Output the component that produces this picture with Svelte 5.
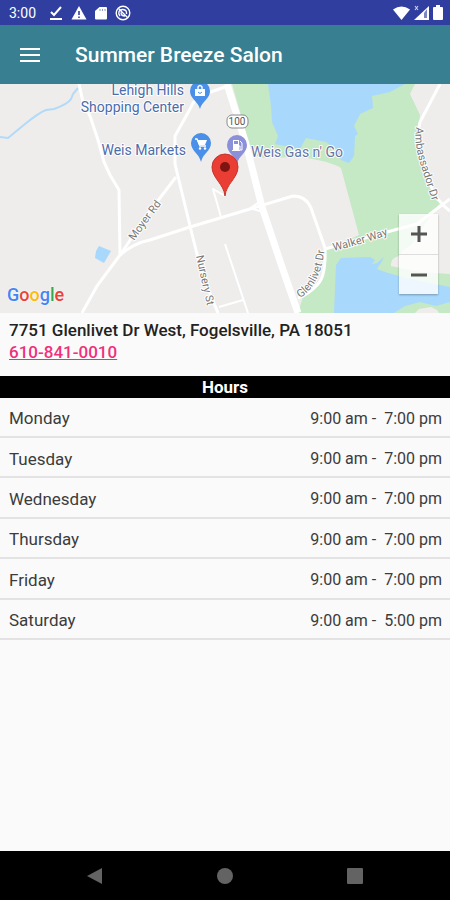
<script>
  const salon = {
    name: 'Summer Breeze Salon',
    address: '7751 Glenlivet Dr West, Fogelsville, PA 18051',
    phone: '610-841-0010',
  };

  const hours = [
    { day: 'Monday', open: '9:00 am', close: '7:00 pm' },
    { day: 'Tuesday', open: '9:00 am', close: '7:00 pm' },
    { day: 'Wednesday', open: '9:00 am', close: '7:00 pm' },
    { day: 'Thursday', open: '9:00 am', close: '7:00 pm' },
    { day: 'Friday', open: '9:00 am', close: '7:00 pm' },
    { day: 'Saturday', open: '9:00 am', close: '5:00 pm' },
  ];
</script>

<div class="screen">
  <div class="status">
    <span class="clock">3:00</span>
    <div class="notices">
      <svg width="14" height="16" viewBox="0 0 14 16" fill="none" stroke="#fff" stroke-width="2">
        <path d="M2 7l3 3 7-8M1 14h12" />
      </svg>
      <svg width="16" height="16" viewBox="0 0 16 16">
        <path d="M8 1l7.500 13.500H.5z" fill="#fff" />
        <path d="M8 6v4M8 11.500v1.500" stroke="#303f9f" stroke-width="1.600" />
      </svg>
      <svg width="12" height="16" viewBox="0 0 12 16">
        <path d="M4.500 2H11q1 0 1 1v10.500q0 1-1 1H1q-1 0-1-1V6z" fill="#fff" />
        <path d="M5 4v2M7.500 4v2M10 4v2" stroke="#8d96cc" />
      </svg>
      <svg width="16" height="16" viewBox="0 0 16 16" fill="none" stroke="#fff" stroke-width="1.400">
        <circle cx="8" cy="8" r="6.800" />
        <path d="M3.500 3.500l9 9M5 11C2.500 8 4 4 8 4.500q4 .5 3.500 4.500M6 7.500q0 3.500 4 3.500" />
      </svg>
    </div>
    <div class="system">
      <svg width="17" height="16" viewBox="0 0 17 16">
        <path d="M0 4.500Q8.500-1.500 17 4.500L8.500 15z" fill="#fff" />
      </svg>
      <svg width="15" height="16" viewBox="0 0 15 16">
        <path d="M0 15L15 1v14z" fill="#fff" />
        <path d="M10 8v5h3V4z" fill="#7c86c4" />
        <path d="M1 1l3 4M4 1L1 5" stroke="#c5cae9" stroke-width="1.200" />
      </svg>
      <svg width="10" height="16" viewBox="0 0 10 16">
        <path d="M3 0h4v2h2q1 0 1 1v11q0 1-1 1H1q-1 0-1-1V3q0-1 1-1h2z" fill="#fff" />
      </svg>
    </div>
  </div>

  <header>
    <button class="menu" aria-label="Menu">
      <svg width="20" height="14" viewBox="0 0 20 14">
        <path d="M0 1h20M0 7h20M0 13h20" stroke="#fff" stroke-width="2" />
      </svg>
    </button>
    <h1>{salon.name}</h1>
  </header>

  <section class="map" aria-label="Map">
    <svg class="tiles" viewBox="0 0 450 229" preserveAspectRatio="xMidYMid slice">
      <rect width="450" height="229" fill="#eeedec" />

      <!-- parks -->
      <path
        fill="#c5e8c5"
        d="M232 0H415L410 10 420 31 418 52 426 86 440 120 420 138 450 190V229H298L303 213Q322 203 324 183L325 166 359 151 341 84Q330 77 300 73L262 74 252 70z"
      />
      <path fill="#eeedec" d="M391 182Q390 174 399 172L420 138 440 120 450 128V190L420 188z" />
      <path fill="#c5e8c5" d="M359 151L398 144 430 131 438 120 412 160 395 172 370 165z" />

      <!-- lakes and stream -->
      <path
        fill="#a9d8fd"
        d="M268 0L271 22 272 38 278 52 275 60 300 65 306 54 326 58 336 65 341 76 349 79 354 72 355 52 358 50 354 42 360 30 373 24 372 12 390 8 405 0z"
      />
      <path
        fill="#a9d8fd"
        d="M334 229L336 181 341 174 370 173 375 176 372 180 377 179 384 173 382 177 377 185 388 189 410 195 450 203V218L436 222 420 218 405 222 394 229z"
      />
      <path fill="#eeedec" d="M415 229l4-4 12-2 6 3 2 3z" />
      <path fill="#a9d8fd" d="M99 162L111 167 104 179 95 174 96 167z" />
      <path
        fill="none"
        stroke="#b2daf9"
        stroke-width="2"
        d="M0 53L8 54 25 40Q40 28 46 26L54 25Q68 20 71 15L73 10 78 4"
      />

      <!-- roads -->
      <g fill="none" stroke="#fff" stroke-width="3" stroke-linejoin="round">
        <path d="M79 0L83 18 90 32 98 56 104 78 110 91 119 106 120 171 97 202 82 229" />
        <path d="M225 3L208 9Q195 12 190 25L175 52V80L190 142 202 190 218 229" />
        <path d="M120 171Q134 159 150 156L190 143 250 125 293 112Q306 112 311 124L325 164Q326 192 318 200 308 211 298 214" />
        <path d="M176 93L150 127 120 171" />
        <path d="M325 165L398 145 417 140 430 130 450 115" />
        <path d="M440 0L420 38Q416 52 421 70L430 100Q436 117 450 127" />
        <path stroke-width="2" d="M225 112L213 105 221 133M225 160L248 229M219 223L243 216M248 126l14-10M250 124l16 5" />
        <path stroke-width="7" d="M227 0L246 60 262 123 281 180 298 229" />
      </g>

      <!-- road names -->
      <path id="moyer" d="M134 157L164 116" fill="none" />
      <path id="nursery" d="M196 172L208 226" fill="none" />
      <path id="walker" d="M334 167Q360 161 390 150" fill="none" />
      <path id="glenlivet" d="M300 214Q322 201 325 160" fill="none" />
      <path id="ambassador" d="M416 43Q414 60 420 79L436 129" fill="none" />
      <g class="road">
        <text><textPath href="#moyer">Moyer Rd</textPath></text>
        <text><textPath href="#nursery">Nursery St</textPath></text>
        <text><textPath href="#walker">Walker Way</textPath></text>
        <text><textPath href="#glenlivet">Glenlivet Dr</textPath></text>
        <text><textPath href="#ambassador">Ambassador Dr</textPath></text>
      </g>
      <rect x="227" y="31" width="21" height="13" rx="5" fill="#fff" stroke="#8a8a8a" />
      <text class="shield" x="237" y="41">100</text>

      <!-- places -->
      <g class="place">
        <text x="184" y="11" text-anchor="end">Lehigh Hills</text>
        <text x="184" y="28" text-anchor="end">Shopping Center</text>
        <text x="186" y="71" text-anchor="end">Weis Markets</text>
        <text class="muted" x="251" y="73">Weis Gas n' Go</text>
      </g>
      <g transform="translate(200 8)">
        <path d="M0 17C-2 9-10 7-10-1a10 10 0 0 1 20 0C10 7 2 9 0 17z" fill="#4a90e8" />
        <path d="M-5-3H5V4H-5z" fill="#fff" />
        <path d="M-2-3v-2q2-3 4 0v2" fill="none" stroke="#fff" stroke-width="1.400" />
        <path d="M-2 0q2 3 4 0" fill="none" stroke="#4a90e8" />
      </g>
      <g transform="translate(201 60)">
        <path d="M0 18C-2 9-10 7-10-1a10 10 0 0 1 20 0C10 7 2 9 0 18z" fill="#4a90e8" />
        <path d="M-6-5h2l3 7h6" fill="none" stroke="#fff" stroke-width="1.300" />
        <path d="M-4-4H6L4 1h-6z" fill="#fff" />
        <circle cx="-1" cy="4.500" r="1.200" fill="#fff" />
        <circle cx="4" cy="4.500" r="1.200" fill="#fff" />
      </g>
      <g transform="translate(237 62)">
        <path d="M0 18C-2 9-10 7-10-1a10 10 0 0 1 20 0C10 7 2 9 0 18z" fill="#8c90d8" />
        <path d="M-4-6H2V4H-4zM-5 4H3V5H-5z" fill="#fff" />
        <path d="M-3-5h4v3h-4z" fill="#8c90d8" />
        <path d="M2 0h1v4h2v-7l-2-2" fill="none" stroke="#fff" />
      </g>
      <g transform="translate(225 84)">
        <path d="M0 28C-1 16-13 10-13-1a13 13 0 0 1 26 0C13 10 1 16 0 28z" fill="#ea3d33" stroke="#c5352c" />
        <circle cy="-1" r="5" fill="#7f1512" />
      </g>
    </svg>

    <span class="google"
      ><span class="blue">G</span><span class="red">o</span><span class="yellow">o</span><span class="blue">g</span><span
        class="green">l</span
      ><span class="red">e</span></span
    >

    <div class="zoom">
      <button aria-label="Zoom in">
        <svg width="18" height="18" viewBox="0 0 18 18"><path d="M1 9h16M9 1v16" /></svg>
      </button>
      <button aria-label="Zoom out">
        <svg width="18" height="18" viewBox="0 0 18 18"><path d="M1 9h16" /></svg>
      </button>
    </div>
  </section>

  <section class="contact">
    <div>{salon.address}</div>
    <a href="tel:{salon.phone}">{salon.phone}</a>
  </section>

  <h2>Hours</h2>
  <table aria-label="Hours">
    <tbody>
      {#each hours as { day, open, close }}
        <tr>
          <th scope="row">{day}</th>
          <td>{open} -&nbsp; {close}</td>
        </tr>
      {/each}
    </tbody>
  </table>

  <nav>
    <button aria-label="Back">
      <svg width="18" height="18" viewBox="0 0 18 18"><path d="M1 9L16 1v16z" /></svg>
    </button>
    <button aria-label="Home">
      <svg width="18" height="18" viewBox="0 0 18 18"><circle cx="9" cy="9" r="8" /></svg>
    </button>
    <button aria-label="Recent apps">
      <svg width="18" height="18" viewBox="0 0 18 18"><rect x="1" y="1" width="16" height="16" rx="1" /></svg>
    </button>
  </nav>
</div>

<style>
  :global(body) {
    margin: 0;
    background: #fafafa;
  }

  .screen {
    display: flex;
    flex-direction: column;
    min-height: 100vh;
    font-family: Roboto, sans-serif;
    font-size: 17px;
    color: #3c3c3c;
    background: #fafafa;
  }

  svg {
    display: block;
  }

  button {
    display: grid;
    place-items: center;
    padding: 0;
    border: 0;
    background: none;
  }

  .status {
    display: flex;
    align-items: center;
    height: 25px;
    padding: 0 7px 0 9px;
    color: #fff;
    background: #303f9f;
  }

  .clock {
    font-size: 14px;
  }

  .notices {
    display: flex;
    gap: 8px;
    margin-left: 13px;
  }

  .system {
    display: flex;
    gap: 4px;
    margin-left: auto;
  }

  header {
    display: flex;
    align-items: center;
    height: 59px;
    color: #fff;
    background: #387f92;
  }

  .menu {
    width: 60px;
    height: 48px;
  }

  h1 {
    margin: 0 0 0 15px;
    font-size: 21px;
    font-weight: 500;
  }

  .map {
    position: relative;
    height: 229px;
    overflow: hidden;
  }

  .tiles {
    width: 100%;
    height: 100%;
  }

  .tiles text {
    paint-order: stroke;
    stroke: #fff;
    stroke-width: 2px;
    stroke-linejoin: round;
  }

  .road {
    font-size: 11px;
    fill: #777;
  }

  .tiles .shield {
    font-size: 10px;
    text-anchor: middle;
    fill: #555;
  }

  .place {
    font-size: 14px;
    fill: #4b6cab;
  }

  .place .muted {
    fill: #6674a5;
  }

  .google {
    position: absolute;
    bottom: 7px;
    left: 7px;
    font-size: 18px;
    font-weight: 500;
    line-height: 22px;
    text-shadow: 0 0 2px #fff;
  }

  .blue {
    color: #4285f4;
  }

  .red {
    color: #ea4335;
  }

  .yellow {
    color: #fbbc05;
  }

  .green {
    color: #34a853;
  }

  .zoom {
    position: absolute;
    right: 12px;
    bottom: 19px;
    width: 39px;
    background: rgba(255, 255, 255, 0.8);
    box-shadow: 0 1px 2px rgba(0, 0, 0, 0.3);
  }

  .zoom button {
    width: 100%;
    height: 40px;
  }

  .zoom button + button {
    border-top: 1px solid #ddd;
  }

  .zoom path {
    stroke: #555;
    stroke-width: 3;
  }

  .contact {
    padding: 6px 9px 13px;
    font-weight: 500;
    line-height: 22px;
    color: #222;
  }

  .contact a {
    color: #f0307c;
  }

  h2 {
    margin: 0;
    font-size: 17px;
    font-weight: 700;
    line-height: 22px;
    text-align: center;
    color: #fff;
    background: #000;
  }

  table {
    width: 100%;
    height: 242px;
    border-collapse: collapse;
  }

  th,
  td {
    padding: 3px 8px 0 9px;
    border-bottom: 2px solid #e3e3e3;
    font-weight: 400;
    text-align: left;
  }

  td {
    font-size: 16px;
    text-align: right;
  }

  nav {
    display: flex;
    justify-content: space-around;
    height: 49px;
    margin-top: auto;
    padding: 0 30px;
    background: #000;
  }

  nav button {
    width: 48px;
  }

  nav svg {
    fill: #636363;
  }
</style>
